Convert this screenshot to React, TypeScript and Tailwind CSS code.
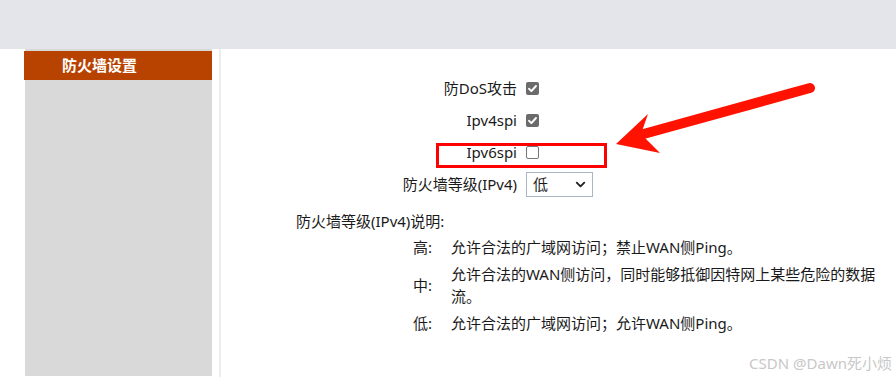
import { ChevronDown } from 'lucide-react'

function Box({ checked }: { checked?: boolean }) {
  if (checked) {
    return (
      <span className="flex h-[13px] w-[13px] items-center justify-center rounded-[2px] bg-[#6b6b6b]">
        <svg width="11" height="11" viewBox="0 0 11 11">
          <path d="M2 5.8 L4.4 8.1 L9 3" fill="none" stroke="#fff" strokeWidth="1.9" strokeLinecap="round" strokeLinejoin="round" />
        </svg>
      </span>
    )
  }
  return <span className="h-[13px] w-[13px] rounded-[2px] border border-[#767676] bg-white" />
}

function Row({ label, children, className }: { label: string; children: React.ReactNode; className?: string }) {
  return (
    <div className={`flex items-center ${className ?? 'h-[32px]'}`}>
      <span className="w-[296px] text-right">{label}</span>
      <span className="ml-[9px] flex items-center">{children}</span>
    </div>
  )
}

const levels = [
  { k: '高:', v: '允许合法的广域网访问；禁止WAN侧Ping。' },
  { k: '中:', v: '允许合法的WAN侧访问，同时能够抵御因特网上某些危险的数据流。' },
  { k: '低:', v: '允许合法的广域网访问；允许WAN侧Ping。' },
]

export default function App() {
  return (
    <div
      className="relative h-[377px] w-[896px] overflow-hidden bg-white text-[15px] text-[#1a1a1a]"
      style={{ fontFamily: '"Noto Sans", "Noto Sans CJK SC", sans-serif' }}
    >
      <div className="h-[49px] bg-[#e4e5ea]" />
      <div className="flex h-[328px]">
        <aside className="ml-[25px] h-[327px] w-[187px] bg-[#d9d9d9] pt-[2px]">
          <div className="-ml-[1px] flex h-[29px] items-center bg-[#b84300] pl-[38px] font-bold text-white">
            防火墙设置
          </div>
        </aside>
        <div className="ml-[7px] w-[2px] bg-[#ececec]" />
        <main className="flex-1 pt-[23px]">
          <Row label="防DoS攻击"><Box checked /></Row>
          <Row label="Ipv4spi"><Box checked /></Row>
          <Row label="Ipv6spi"><Box /></Row>
          <Row label="防火墙等级(IPv4)" className="mt-[4px] h-[25px]">
            <span className="flex h-[25px] w-[67px] items-center justify-between border border-[#a7b6c6] pl-[6px] pr-[4px]">
              低
              <ChevronDown size={15} strokeWidth={3} className="text-[#222]" />
            </span>
          </Row>
          <div className="ml-[75px] mt-[13px] leading-[22px]">防火墙等级(IPv4)说明:</div>
          <div className="mt-[4px] flex flex-col gap-[5px] leading-[22px]">
            {levels.map((l) => (
              <div key={l.k} className="flex items-center">
                <span className="ml-[192px] w-[38px]">{l.k}</span>
                <span className="w-[438px]">{l.v}</span>
              </div>
            ))}
          </div>
        </main>
      </div>

      <div className="pointer-events-none absolute left-[436px] top-[143px] h-[25px] w-[171px] border-[3px] border-[#ff0000]" />
      <svg className="pointer-events-none absolute left-0 top-0" width="896" height="377">
        <line x1="810" y1="88" x2="640" y2="135" stroke="#ff1200" strokeWidth="10" strokeLinecap="round" />
        <polygon points="616,144 648,114 641,134 660,153" fill="#ff1200" />
      </svg>
      <div className="absolute right-[4px] top-[352px] text-[15px] text-[#c8c8c8]">CSDN @Dawn死小烦</div>
    </div>
  )
}
